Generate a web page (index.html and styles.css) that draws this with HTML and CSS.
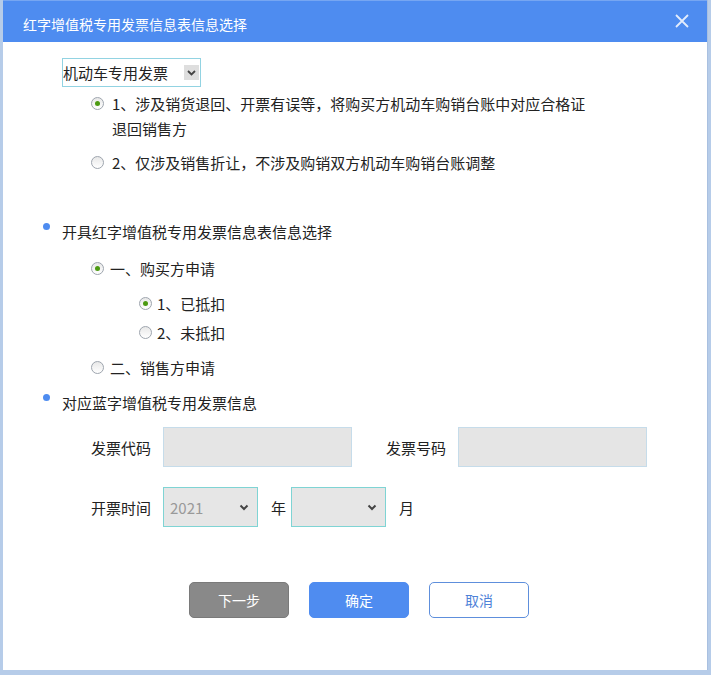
FILE: index.html
```html
<!DOCTYPE html>
<html lang="zh-CN">
<head>
<meta charset="utf-8">
<title>红字增值税专用发票信息表信息选择</title>
<link rel="stylesheet" href="styles.css">
</head>
<body>
<div class="dialog">
  <div class="titlebar">
    <span class="title">红字增值税专用发票信息表信息选择</span>
    <span class="close">
      <svg width="14" height="14" viewBox="0 0 14 14"><path d="M1 1 L13 13 M13 1 L1 13" stroke="#e3ecfc" stroke-width="1.8" fill="none"/></svg>
    </span>
  </div>
  <div class="content">
    <div class="fakeselect">
      <span class="fs-text">机动车专用发票</span>
      <span class="fs-arrow"><svg width="9" height="6" viewBox="0 0 9 6"><path d="M1 1 L4.5 4.5 L8 1" stroke="#444" stroke-width="1.8" fill="none"/></svg></span>
    </div>
    <div class="opt opt-1"><span class="radio checked"></span><span class="opt-text">1、涉及销货退回、开票有误等，将购买方机动车购销台账中对应合格证退回销售方</span></div>
    <div class="opt opt-2"><span class="radio"></span><span class="opt-text">2、仅涉及销售折让，不涉及购销双方机动车购销台账调整</span></div>

    <div class="bullet b-1"><span class="dot"></span><span>开具红字增值税专用发票信息表信息选择</span></div>
    <div class="opt lvl1 r-buyer"><span class="radio checked"></span><span>一、购买方申请</span></div>
    <div class="opt lvl2 r-a"><span class="radio checked"></span><span>1、已抵扣</span></div>
    <div class="opt lvl2 r-b"><span class="radio"></span><span>2、未抵扣</span></div>
    <div class="opt lvl1 r-seller"><span class="radio"></span><span>二、销售方申请</span></div>

    <div class="bullet b-2"><span class="dot"></span><span>对应蓝字增值税专用发票信息</span></div>

    <div class="formrow fr-1">
      <span class="label">发票代码</span>
      <span class="input"></span>
      <span class="label label-2">发票号码</span>
      <span class="input"></span>
    </div>
    <div class="formrow fr-2">
      <span class="label">开票时间</span>
      <span class="dsel"><span class="dsel-text">2021</span><svg width="10" height="7" viewBox="0 0 10 7"><path d="M1.5 1.5 L5 5 L8.5 1.5" stroke="#444" stroke-width="2" fill="none"/></svg></span>
      <span class="unit unit-year">年</span>
      <span class="dsel"><span class="dsel-text"></span><svg width="10" height="7" viewBox="0 0 10 7"><path d="M1.5 1.5 L5 5 L8.5 1.5" stroke="#444" stroke-width="2" fill="none"/></svg></span>
      <span class="unit unit-month">月</span>
    </div>

    <div class="buttons">
      <span class="btn btn-next">下一步</span>
      <span class="btn btn-ok">确定</span>
      <span class="btn btn-cancel">取消</span>
    </div>
  </div>
</div>
</body>
</html>
```
FILE: styles.css
```css
html, body {
  margin: 0;
  padding: 0;
}
body {
  background: #b6cce9;
  width: 711px;
  height: 675px;
  overflow: hidden;
  font-family: "Noto Sans CJK SC", "Noto Sans", sans-serif;
  color: #222;
}
.dialog {
  margin-left: 3px;
  width: 704px;
  height: 670px;
  background: #fff;
  border-right: 1px solid #a9c0e0;
}
.titlebar {
  height: 42px;
  box-sizing: border-box;
  background: #4e8cf0;
  border-top: 1px solid #76a6f2;
  display: flex;
  align-items: center;
  justify-content: space-between;
  padding: 4px 18px 0 20px;
}
.title {
  color: #fff;
  font-size: 14px;
  line-height: 20px;
}
.close {
  display: flex;
  margin-top: -6px;
}
.content {
  font-size: 15px;
  line-height: 25px;
}
.fakeselect {
  margin: 16px 0 0 59px;
  width: 139px;
  height: 29px;
  box-sizing: border-box;
  border: 1px solid #92d3e2;
  display: flex;
  align-items: center;
  justify-content: space-between;
  padding: 0 1px 0 0;
}
.fs-text {
  font-size: 15px;
  line-height: 27px;
}
.fs-arrow {
  width: 15px;
  height: 15px;
  background: #dedede;
  display: flex;
  align-items: center;
  justify-content: center;
}
.opt {
  display: flex;
  align-items: flex-start;
  margin-left: 88px;
}
.radio {
  flex: none;
  width: 13px;
  height: 13px;
  box-sizing: border-box;
  border: 1px solid #9ea5ae;
  border-radius: 50%;
  background: linear-gradient(#e8e8e8, #fff);
  margin: 6px 8px 0 0;
  display: flex;
  align-items: center;
  justify-content: center;
}
.radio.checked::after {
  content: "";
  width: 5px;
  height: 5px;
  border-radius: 50%;
  background: #4c9a12;
}
.opt-text {
  width: 480px;
}
.opt-1 { margin-top: 4px; }
.opt-2 { margin-top: 9px; }
.bullet {
  display: flex;
  align-items: flex-start;
  margin-left: 40px;
}
.dot {
  flex: none;
  width: 7px;
  height: 7px;
  border-radius: 50%;
  background: #4e8cf0;
  margin: 4px 12px 0 0;
}
.b-1 { margin-top: 44px; }
.lvl1 .radio { margin-right: 6px; }
.lvl2 { margin-left: 136px; }
.lvl2 .radio { margin-right: 5px; }
.r-buyer { margin-top: 12px; }
.r-a { margin-top: 10px; }
.r-b { margin-top: 4px; }
.r-seller { margin-top: 10px; }
.b-2 { margin-top: 10px; }
.formrow {
  display: flex;
  align-items: center;
  margin-left: 88px;
  height: 40px;
}
.fr-1 { margin-top: 12px; }
.fr-2 { margin-top: 20px; }
.label {
  width: 60px;
  margin-right: 12px;
}
.label-2 {
  margin-left: 34px;
}
.input {
  width: 189px;
  height: 40px;
  box-sizing: border-box;
  background: #e5e5e5;
  border: 1px solid #c6dcea;
}
.dsel {
  width: 95px;
  height: 40px;
  box-sizing: border-box;
  background: #e6e6e6;
  border: 1px solid #7fd4d4;
  display: flex;
  align-items: center;
  justify-content: space-between;
  padding: 0 8px 0 6px;
}
.dsel-text {
  color: #999;
  font-size: 15px;
}
.unit-year {
  margin: 0 5px 0 13px;
}
.unit-month {
  margin-left: 13px;
}
.buttons {
  display: flex;
  gap: 20px;
  margin: 55px 0 0 186px;
}
.btn {
  width: 100px;
  height: 36px;
  box-sizing: border-box;
  border-radius: 5px;
  display: flex;
  align-items: center;
  justify-content: center;
  font-size: 14px;
}
.btn-next {
  background: #898989;
  border: 1px solid #7a7a7a;
  color: #fff;
}
.btn-ok {
  background: #4f8cf0;
  border: 1px solid #4f8cf0;
  color: #fff;
}
.btn-cancel {
  background: #fff;
  border: 1px solid #5e8fdc;
  color: #4e82d8;
}
```
